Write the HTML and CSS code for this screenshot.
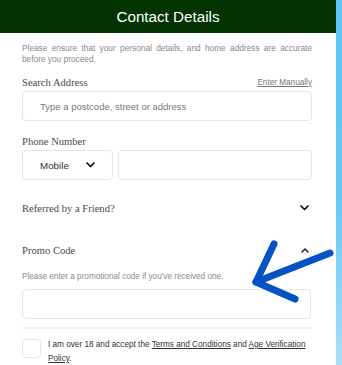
FILE: index.html
```html
<!DOCTYPE html>
<html lang="en">
<head>
<meta charset="utf-8">
<title>Contact Details</title>
<link rel="stylesheet" href="styles.css">
</head>
<body>
<div class="page">
  <main class="main">
    <header class="header"><h1 class="title">Contact Details</h1></header>
    <div class="content">
      <p class="intro">Please ensure that your personal details, and home address are accurate before you proceed.</p>

      <div class="label-row">
        <span class="label">Search Address</span>
        <a class="manual" href="#">Enter Manually</a>
      </div>
      <div class="field"><span class="placeholder">Type a postcode, street or address</span></div>

      <div class="label-row phone-label"><span class="label">Phone Number</span></div>
      <div class="phone-row">
        <div class="field select">
          <span class="select-text">Mobile</span>
          <svg class="chev" width="9" height="6" viewBox="0 0 9 6"><path d="M1 1 L4.5 4.5 L8 1" fill="none" stroke="#111" stroke-width="1.7" stroke-linecap="round" stroke-linejoin="round"/></svg>
        </div>
        <div class="field phone-input"></div>
      </div>

      <div class="acc-row referred">
        <span class="label">Referred by a Friend?</span>
        <svg class="chev" width="9" height="6" viewBox="0 0 9 6"><path d="M1 1 L4.5 4.5 L8 1" fill="none" stroke="#111" stroke-width="1.7" stroke-linecap="round" stroke-linejoin="round"/></svg>
      </div>

      <div class="acc-row promo">
        <span class="label">Promo Code</span>
        <svg class="chev up" width="8" height="5" viewBox="0 0 8 5"><path d="M1 4 L4 1 L7 4" fill="none" stroke="#111" stroke-width="1.4" stroke-linecap="round" stroke-linejoin="round"/></svg>
      </div>
      <p class="promo-text">Please enter a promotional code if you've received one.</p>
      <div class="field promo-input"></div>

      <hr class="divider">

      <div class="consent">
        <span class="checkbox"></span>
        <p class="consent-text">I am over 18 and accept the <a href="#">Terms and Conditions</a> and <a href="#">Age Verification</a><br><a href="#">Policy</a>.</p>
      </div>
    </div>
  </main>
  <div class="strip"></div>
  <svg class="arrow" width="92" height="70" viewBox="0 0 92 70">
    <g fill="none" stroke="#0652c4" stroke-width="7" stroke-linecap="round" stroke-linejoin="round">
      <path d="M82 15 L8 44"/>
      <path d="M26 6 L8 44 L47 61"/>
    </g>
  </svg>
</div>
</body>
</html>
```

FILE: styles.css
```css
html, body {
  margin: 0;
  padding: 0;
  background: #fff;
}
body {
  font-family: "Liberation Sans", Arial, sans-serif;
  width: 342px;
  height: 365px;
  overflow: hidden;
}
.page {
  position: relative;
  display: flex;
  width: 342px;
  height: 365px;
}
.main {
  width: 336px;
  flex: none;
}
.strip {
  width: 6px;
  flex: none;
  background: linear-gradient(to bottom, #5ec4f3 0%, #66c8f4 55%, #a9def8 100%);
}
.header {
  height: 33px;
  background: #023301;
  display: flex;
  align-items: center;
  justify-content: center;
}
.title {
  margin: 0;
  color: #fff;
  font-size: 15.2px;
  font-weight: normal;
  line-height: 1;
}
.content {
  padding: 0 24px 0 22px;
}
.intro {
  margin: 10px 0 0;
  font-size: 8.3px;
  line-height: 10.5px;
  color: #8a8a8a;
  text-align: justify;
}
.label-row {
  display: flex;
  justify-content: space-between;
  align-items: center;
  height: 14px;
  margin-top: 11px;
}
.label {
  font-family: "Liberation Serif", "Times New Roman", serif;
  font-size: 10.6px;
  color: #4a4a4a;
}
.manual {
  font-size: 8.2px;
  color: #777;
  text-decoration: underline;
}
.field {
  box-sizing: border-box;
  height: 30px;
  border: 1px solid #e6e6e6;
  border-radius: 4px;
  background: #fff;
  display: flex;
  align-items: center;
}
.label-row + .field {
  margin-top: 2px;
}
.placeholder {
  padding-left: 17px;
  font-size: 9.5px;
  color: #777;
}
.phone-label {
  margin-top: 13px;
}
.phone-row {
  display: flex;
  gap: 5px;
  margin-top: 2px;
}
.select {
  width: 91px;
  flex: none;
  padding: 0 17px 0 17px;
  justify-content: space-between;
}
.select-text {
  font-size: 9.8px;
  color: #333;
}
.phone-input {
  flex: 1;
}
.acc-row {
  display: flex;
  justify-content: space-between;
  align-items: center;
  height: 14px;
  padding-right: 3px;
}
.referred {
  margin-top: 21px;
}
.promo {
  margin-top: 28px;
  padding-right: 3px;
}
.promo-text {
  margin: 15px 0 0;
  font-size: 8.2px;
  line-height: 10px;
  color: #8a8a8a;
}
.promo-input {
  margin-top: 7px;
  height: 30px;
  margin-right: 1px;
}
.divider {
  margin: 8px 0 0;
  border: 0;
  height: 2px;
  background: #f0f0f0;
}
.consent {
  display: flex;
  align-items: flex-start;
  gap: 7px;
  margin-top: 9px;
}
.checkbox {
  box-sizing: border-box;
  width: 19px;
  height: 19px;
  flex: none;
  border: 1px solid #e6e6e6;
  border-radius: 4px;
  margin-top: 1px;
}
.consent-text {
  margin: 0;
  font-size: 8.2px;
  line-height: 14px;
  color: #333;
}
.consent-text a {
  color: #333;
  text-decoration: underline;
}
.arrow {
  position: absolute;
  left: 248px;
  top: 238px;
  pointer-events: none;
}
```
